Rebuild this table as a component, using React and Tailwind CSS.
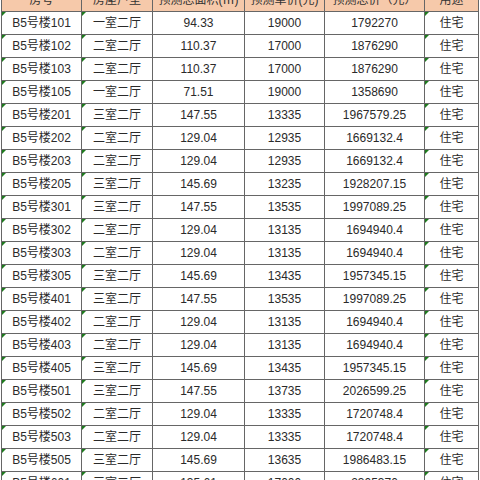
const rows = [
  ["B5号楼101", "一室二厅", "94.33", "19000", "1792270"],
  ["B5号楼102", "二室二厅", "110.37", "17000", "1876290"],
  ["B5号楼103", "二室二厅", "110.37", "17000", "1876290"],
  ["B5号楼105", "一室二厅", "71.51", "19000", "1358690"],
  ["B5号楼201", "三室二厅", "147.55", "13335", "1967579.25"],
  ["B5号楼202", "二室二厅", "129.04", "12935", "1669132.4"],
  ["B5号楼203", "二室二厅", "129.04", "12935", "1669132.4"],
  ["B5号楼205", "三室二厅", "145.69", "13235", "1928207.15"],
  ["B5号楼301", "三室二厅", "147.55", "13535", "1997089.25"],
  ["B5号楼302", "二室二厅", "129.04", "13135", "1694940.4"],
  ["B5号楼303", "二室二厅", "129.04", "13135", "1694940.4"],
  ["B5号楼305", "三室二厅", "145.69", "13435", "1957345.15"],
  ["B5号楼401", "三室二厅", "147.55", "13535", "1997089.25"],
  ["B5号楼402", "二室二厅", "129.04", "13135", "1694940.4"],
  ["B5号楼403", "二室二厅", "129.04", "13135", "1694940.4"],
  ["B5号楼405", "三室二厅", "145.69", "13435", "1957345.15"],
  ["B5号楼501", "三室二厅", "147.55", "13735", "2026599.25"],
  ["B5号楼502", "二室二厅", "129.04", "13335", "1720748.4"],
  ["B5号楼503", "二室二厅", "129.04", "13335", "1720748.4"],
  ["B5号楼505", "三室二厅", "145.69", "13635", "1986483.15"],
  ["B5号楼601", "三室二厅", "135.61", "17000", "2305370"],
]

const headers = ["房号", "房屋户型", "预测总面积(㎡)", "预测单价(元)", "预测总价（元）", "用途"]

function Tick() {
  return (
    <span className="absolute top-0 left-0 w-0 h-0 border-t-[4px] border-r-[4px] border-t-[#1e7b1e] border-r-transparent" />
  )
}

function Cell({ children, tick }) {
  return (
    <div className="relative bg-white h-[22px] flex items-center justify-center">
      {tick && <Tick />}
      {children}
    </div>
  )
}

export default function App() {
  return (
    <div
      className="w-[480px] h-[480px] overflow-hidden bg-white text-[12px] text-[#2a2a2a]"
      style={{ fontFamily: '"Liberation Sans", "Noto Sans CJK SC", sans-serif' }}
    >
      <div className="ml-px mt-[-11px] w-[478px] grid grid-cols-[79px_70px_91px_79px_99px_53px] gap-px bg-[#666666] px-px">
        {headers.map((h) => (
          <div key={h} className="bg-[#f6c9aa] h-[22px] flex items-center justify-center text-[#333]">
            {h}
          </div>
        ))}
        {rows.map((r) => (
          <Row key={r[0]} r={r} />
        ))}
      </div>
    </div>
  )
}

function Row({ r }) {
  return (
    <>
      <Cell tick>{r[0]}</Cell>
      <Cell tick>{r[1]}</Cell>
      <Cell>{r[2]}</Cell>
      <Cell>{r[3]}</Cell>
      <Cell>{r[4]}</Cell>
      <Cell tick>住宅</Cell>
    </>
  )
}
